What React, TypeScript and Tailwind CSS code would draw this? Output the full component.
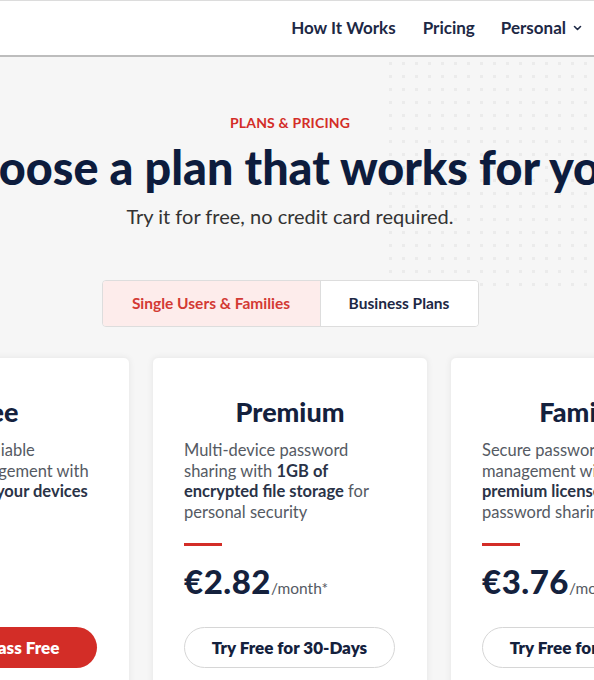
import React from "react";

const font = { fontFamily: "Lato, 'Noto Sans', sans-serif" };

function Card({
  title,
  desc,
  price,
  primary,
  button,
}: {
  title: string;
  desc: React.ReactNode;
  price?: string;
  primary?: boolean;
  button: string;
}) {
  return (
    <div className="w-[276px] shrink-0 bg-white rounded-[6px] shadow-[0_0_6px_rgba(0,0,0,0.06)] border border-[#eeeeee] px-[31px] pt-[38px] pb-[20px] flex flex-col">
      <h3 className="text-center text-[27px] font-black text-[#14213d] leading-[32px]">{title}</h3>
      <p className="mt-[12px] text-[16.5px] leading-[20.7px] text-[#555a63] h-[84px]">{desc}</p>
      <div className="mt-[19px] h-[3px] w-[38px] bg-[#d32d27]" />
      <div className="mt-[11px] h-[36px] flex items-baseline">
        {price && (
          <>
            <span className="text-[33px] font-black text-[#14213d] tracking-[0.5px]">{price}</span>
            <span className="text-[15.5px] text-[#555a63]">/month*</span>
          </>
        )}
      </div>
      <div className="mt-[34px]">
        {primary ? (
          <button className="w-[211px] h-[41px] rounded-full bg-[#d32d27] text-white font-extrabold text-[17px]">
            {button}
          </button>
        ) : (
          <button className="w-[211px] h-[41px] rounded-full bg-white border border-[#d6d6d6] text-[#14213d] font-extrabold text-[17px]">
            {button}
          </button>
        )}
      </div>
    </div>
  );
}

export default function App() {
  return (
    <div className="min-h-screen bg-[#f6f6f6] overflow-hidden" style={font}>
      <header className="h-[57px] bg-white border-t border-t-[#dcdcdc] border-b-2 border-b-[#bdbdbd] flex items-center justify-end pr-[12px] gap-[23px] text-[17px] font-bold text-[#1d2845]">
        <a className="mr-[4px]">How It Works</a>
        <a className="mr-[3px]">Pricing</a>
        <a className="flex items-center gap-[7px]">
          Personal
          <svg width="9" height="6" viewBox="0 0 9 6" fill="none">
            <path d="M1.5 1.5 L4.5 4.5 L7.5 1.5" stroke="#1d2845" strokeWidth="1.6" strokeLinecap="round" strokeLinejoin="round" />
          </svg>
        </a>
      </header>
      <main className="relative pr-[14px]">
        <div className="absolute right-0 top-0 w-[210px] h-[235px] bg-[radial-gradient(#ebebeb_1.4px,transparent_1.6px)] bg-[length:13px_13px]" />
        <div className="relative flex flex-col items-center pt-[55px]">
          <div className="text-[14px] font-bold text-[#d32d27] tracking-[0.2px]">PLANS &amp; PRICING</div>
          <div className="w-full flex justify-center mt-[8px]">
            <h1 className="whitespace-nowrap text-[46.7px] leading-[52px] font-black text-[#0d1c3d] mr-[12px]">
              Choose a plan that works for you
            </h1>
          </div>
          <p className="mt-[8px] text-[20px] text-[#333]">Try it for free, no credit card required.</p>
          <div className="mt-[49px] flex h-[47px] rounded-[4px] border border-[#dddddd] overflow-hidden">
            <div className="w-[218px] bg-[#fdeceb] flex items-center justify-center text-[15.5px] font-bold text-[#d33a34] border-r border-[#dddddd]">
              Single Users &amp; Families
            </div>
            <div className="w-[157px] bg-white flex items-center justify-center text-[15.5px] font-bold text-[#1d2845]">
              Business Plans
            </div>
          </div>
          <div className="w-full flex justify-center gap-[22px] mt-[30px]">
            <Card
              title="Free"
              desc={
                <>
                  A simple and reliable
                  <br />
                  password management with
                  <br />
                  <b className="text-[#2a3347]">access to all of your devices</b>
                </>
              }
              primary
              button="Get LastPass Free"
            />
            <Card
              title="Premium"
              desc={
                <>
                  Multi-device password
                  <br />
                  sharing with <b className="text-[#2a3347]">1GB of</b>
                  <br />
                  <b className="text-[#2a3347]">encrypted file storage</b> for
                  <br />
                  personal security
                </>
              }
              price="€2.82"
              button="Try Free for 30-Days"
            />
            <Card
              title="Families"
              desc={
                <>
                  Secure password
                  <br />
                  management with 6
                  <br />
                  <b className="text-[#2a3347]">premium licenses</b> and
                  <br />
                  password sharing
                </>
              }
              price="€3.76"
              button="Try Free for 30-Days"
            />
          </div>
        </div>
      </main>
    </div>
  );
}
